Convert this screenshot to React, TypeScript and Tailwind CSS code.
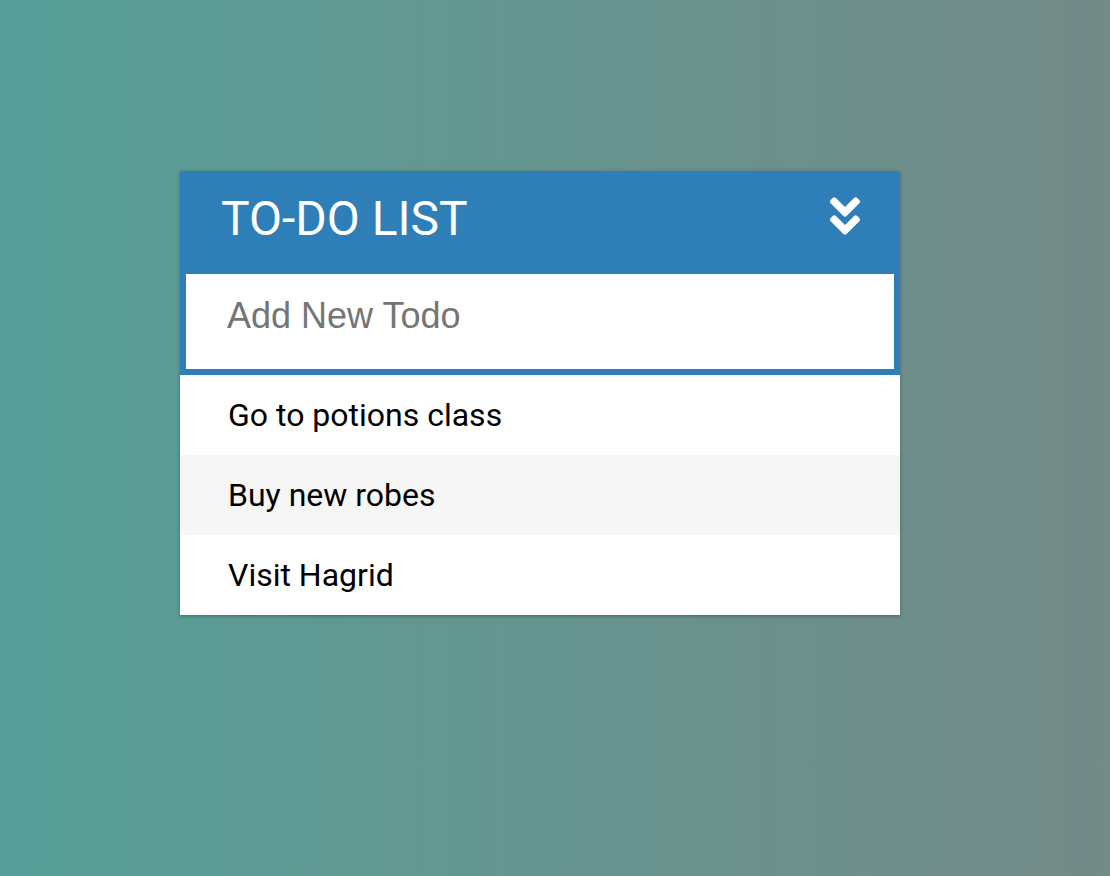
import { FaAngleDoubleDown } from 'react-icons/fa';

const todos = ['Go to potions class', 'Buy new robes', 'Visit Hagrid'];

export default function App() {
  return (
    <div className="min-h-[876px] bg-linear-to-r from-[#559f98] to-[#738a87] pl-[180px] pt-[171px] font-['Roboto',sans-serif]">
      <div className="w-[720px] bg-white shadow-[0_1px_4px_rgba(0,0,0,0.3)]">
        <div className="bg-[#2e7fb8] px-[6px] pb-[6px]">
          <div className="flex h-[103px] items-center justify-between pb-[8px] pl-[35px] pr-[25px]">
            <h1 className="text-[48px] leading-none font-normal text-white">TO-DO LIST</h1>
            <button type="button" className="mb-[5px] text-white">
              <FaAngleDoubleDown size={48} />
            </button>
          </div>
          <input
            type="text"
            placeholder="Add New Todo"
            className="block h-[95px] w-full bg-white pb-[11px] pl-[41px] font-['Liberation_Sans',Arial,sans-serif] text-[36px] text-black outline-none placeholder:text-[#757575]"
          />
        </div>
        <ul>
          {todos.map((todo, i) => (
            <li
              key={todo}
              className={`flex h-[80px] items-center pl-[48px] text-[32px] text-black ${i % 2 === 1 ? 'bg-[#f6f6f6]' : 'bg-white'}`}
            >
              {todo}
            </li>
          ))}
        </ul>
      </div>
    </div>
  );
}
